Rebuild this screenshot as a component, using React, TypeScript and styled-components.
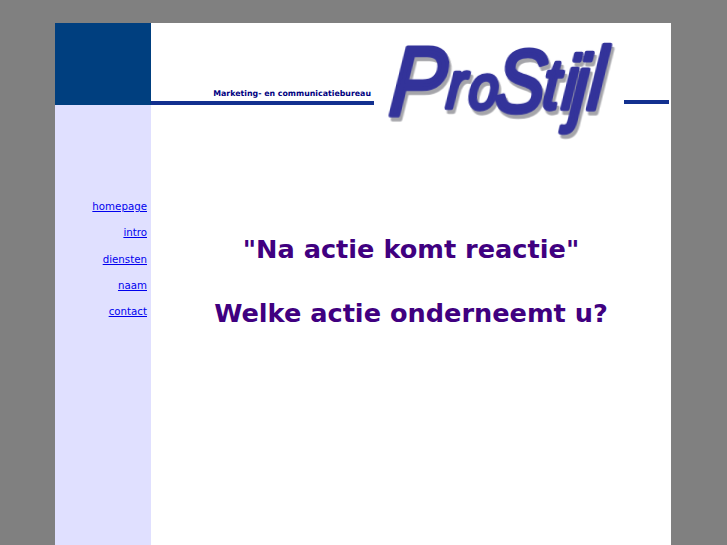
import React from "react";
import styled, { createGlobalStyle } from "styled-components";

const Global = createGlobalStyle`
  html, body { margin: 0; padding: 0; height: 100%; overflow: hidden; background: #808080; }
  #root { height: 100%; }
`;

const Page = styled.div`
  height: 545px;
  padding: 23px 0 0 55px;
  box-sizing: border-box;
  overflow: hidden;
`;

const Frame = styled.div`
  width: 616px;
  height: 522px;
  display: grid;
  grid-template-columns: 96px 1fr;
  grid-template-rows: 82px 1fr;
  background: #fff;
  font-family: "DejaVu Sans", sans-serif;
`;

const Corner = styled.div`
  background: #003f7f;
`;

const Banner = styled.header`
  display: flex;
  align-items: flex-end;
  min-width: 0;
`;

const TaglineBlock = styled.div`
  width: 223px;
  flex: none;
  display: flex;
  flex-direction: column;
  align-items: flex-end;
`;

const Tagline = styled.div`
  font-size: 7.85px;
  font-weight: 700;
  line-height: 11px;
  color: #000080;
  padding: 0 3px 2px 0;
  white-space: nowrap;
`;

const Rule = styled.div`
  height: 4px;
  width: 100%;
  background: #12308f;
`;

const Logo = styled.svg`
  flex: none;
  width: 250px;
  height: 100px;
  margin-bottom: -35px;
  display: block;
  overflow: visible;
`;

const LogoWord = styled.text`
  font-family: "Liberation Sans", sans-serif;
  font-style: italic;
  fill: #33339a;
  stroke: #33339a;
  stroke-width: 4.5px;
  stroke-linejoin: round;
  filter: drop-shadow(3px 4px 0.6px #a5a5aa);
`;

const RightRule = styled.div`
  width: 45px;
  height: 4px;
  background: #12308f;
  margin-bottom: 1px;
`;

const Sidebar = styled.nav`
  background: #e0e0ff;
  display: flex;
  flex-direction: column;
  align-items: flex-end;
  gap: 14px;
  padding: 95px 4px 0 0;
`;

const NavLink = styled.a`
  font-size: 10.25px;
  line-height: 12.3px;
  color: #0000ee;
  text-decoration: underline;
`;

const Main = styled.main`
  display: flex;
  flex-direction: column;
  align-items: center;
  gap: 32px;
  padding: 128px 0 0 0;
`;

const Slogan = styled.h1`
  margin: 0;
  font-size: 25.6px;
  font-weight: 700;
  line-height: 32px;
  color: #400080;
  white-space: nowrap;
`;

const links = ["homepage", "intro", "diensten", "naam", "contact"];

const glyphs: [string, number, number, number][] = [
  ["P", 17, 75, 98],
  ["r", 84, 68, 66],
  ["o", 110, 69, 62],
  ["S", 141, 72, 88],
  ["t", 197, 69, 70],
  ["i", 220, 69, 76],
  ["j", 231, 75, 85],
  ["l", 250, 70, 88],
];

export default function App() {
  return (
    <>
      <Global />
      <Page>
        <Frame>
          <Corner />
          <Banner>
            <TaglineBlock>
              <Tagline>Marketing- en communicatiebureau</Tagline>
              <Rule />
            </TaglineBlock>
            <Logo viewBox="0 0 250 100" role="img" aria-label="ProStijl">
              <g transform="translate(6 0) skewX(-5) scale(0.85 1)">
                <LogoWord>
                  {glyphs.map(([c, x, y, s]) => (
                    <tspan key={x} x={x} y={y} fontSize={s}>{c}</tspan>
                  ))}
                </LogoWord>
              </g>
            </Logo>
            <RightRule />
          </Banner>
          <Sidebar>
            {links.map((l) => (
              <NavLink key={l} href="#">{l}</NavLink>
            ))}
          </Sidebar>
          <Main>
            <Slogan>"Na actie komt reactie"</Slogan>
            <Slogan>Welke actie onderneemt u?</Slogan>
          </Main>
        </Frame>
      </Page>
    </>
  );
}
